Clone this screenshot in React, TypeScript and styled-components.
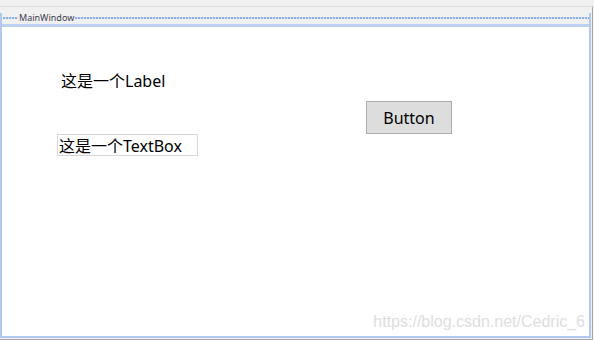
import styled, { createGlobalStyle } from "styled-components";

const GlobalStyle = createGlobalStyle`
  html, body {
    margin: 0;
    padding: 0;
    background: #f0f0f0;
  }
  * {
    box-sizing: border-box;
  }
`;

const Shell = styled.div`
  width: 594px;
  height: 340px;
  padding-top: 6px;
  background: #f0f0f0;
  font-family: "Noto Sans", "Noto Sans CJK SC", sans-serif;
`;

const Frame = styled.div`
  width: 593px;
  height: 334px;
  padding: 6px 1px 1px 0;
  border-top: 1px solid #dadada;
  border-right: 1px solid #a8a8a8;
  border-bottom: 1px solid #a8a8a8;
  display: flex;
`;

const Window = styled.div`
  flex: 1;
  display: flex;
  flex-direction: column;
  border: 2px solid #b3c8ee;
  border-top: none;
  position: relative;
`;

const TitleBar = styled.div`
  height: 14px;
  flex-shrink: 0;
  display: flex;
  align-items: flex-start;
  border-bottom: 3px solid #bcd0f2;
  background: #f0f0f0;
  position: relative;
`;

const DottedLine = styled.div`
  position: absolute;
  left: 1px;
  right: 0;
  top: 4px;
  height: 2px;
  background-image: repeating-linear-gradient(
    to right,
    #8eaee6 0 2px,
    #d4e0f6 2px 3px
  );
`;

const Title = styled.span`
  position: relative;
  margin-left: 16px;
  margin-top: 0;
  padding: 0 1px;
  background: #f0f0f0;
  font-family: "Noto Sans", sans-serif;
  font-size: 9px;
  line-height: 10px;
  color: #3c3c50;
`;

const Content = styled.div`
  flex: 1;
  background: #ffffff;
  display: grid;
  grid-template-columns: 364px auto;
  align-items: start;
`;

const LeftColumn = styled.div`
  display: flex;
  flex-direction: column;
  align-items: flex-start;
  padding-left: 55px;
`;

const Label = styled.div`
  margin-top: 44px;
  margin-left: 4px;
  font-size: 16px;
  line-height: 20px;
  color: #000;
`;

const TextBox = styled.input`
  margin-top: 43px;
  width: 141px;
  height: 22px;
  padding: 0 1px;
  border: 1px solid #d6d6d6;
  background: #fff;
  font-family: "Noto Sans", "Noto Sans CJK SC", sans-serif;
  font-size: 16px;
  color: #000;
  outline: none;
`;

const Button = styled.button`
  margin-top: 74px;
  width: 86px;
  height: 33px;
  padding: 0;
  border: 1px solid #adadad;
  background: #dddddd;
  font-family: "Noto Sans", sans-serif;
  font-size: 16px;
  color: #000;
`;

const Watermark = styled.span`
  position: absolute;
  right: 4px;
  bottom: 5px;
  font-family: "Liberation Sans", Arial, sans-serif;
  font-size: 16px;
  line-height: 18px;
  color: #dedede;
`;

const App = () => {
  return (
    <>
      <GlobalStyle />
      <Shell>
        <Frame>
          <Window>
            <TitleBar>
              <DottedLine />
              <Title>MainWindow</Title>
            </TitleBar>
            <Content>
              <LeftColumn>
                <Label>这是一个Label</Label>
                <TextBox defaultValue="这是一个TextBox" />
              </LeftColumn>
              <div>
                <Button>Button</Button>
              </div>
            </Content>
            <Watermark>https://blog.csdn.net/Cedric_6</Watermark>
          </Window>
        </Frame>
      </Shell>
    </>
  );
};

export default App;
